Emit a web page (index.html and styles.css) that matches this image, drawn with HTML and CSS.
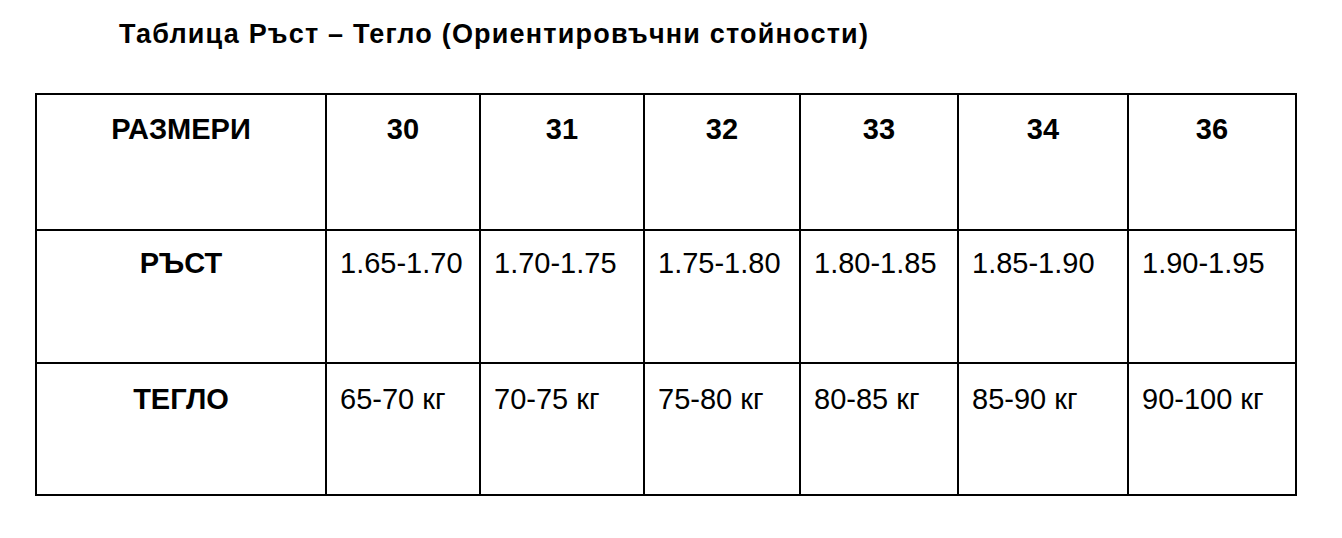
FILE: index.html
```html
<!DOCTYPE html>
<html lang="bg">
<head>
<meta charset="utf-8">
<title>Таблица Ръст – Тегло</title>
<link rel="stylesheet" href="styles.css">
</head>
<body>
<h1 class="title">Таблица Ръст – Тегло (Ориентировъчни стойности)</h1>
<div class="grid">
  <div class="cell head r1">РАЗМЕРИ</div>
  <div class="cell head r1">30</div>
  <div class="cell head r1">31</div>
  <div class="cell head r1">32</div>
  <div class="cell head r1">33</div>
  <div class="cell head r1">34</div>
  <div class="cell head r1">36</div>

  <div class="cell head r2">РЪСТ</div>
  <div class="cell data r2">1.65-1.70</div>
  <div class="cell data r2">1.70-1.75</div>
  <div class="cell data r2">1.75-1.80</div>
  <div class="cell data r2">1.80-1.85</div>
  <div class="cell data r2">1.85-1.90</div>
  <div class="cell data r2">1.90-1.95</div>

  <div class="cell head r3">ТЕГЛО</div>
  <div class="cell data r3">65-70 кг</div>
  <div class="cell data r3">70-75 кг</div>
  <div class="cell data r3">75-80 кг</div>
  <div class="cell data r3">80-85 кг</div>
  <div class="cell data r3">85-90 кг</div>
  <div class="cell data r3">90-100 кг</div>
</div>
</body>
</html>
```
FILE: styles.css
```css
html, body {
  margin: 0;
  padding: 0;
  background: #fff;
}
body {
  font-family: "Liberation Sans", Arial, sans-serif;
  color: #000;
  width: 1342px;
  height: 538px;
  overflow: hidden;
}
.title {
  margin: 0;
  padding: 19px 0 0 119px;
  font-size: 27px;
  line-height: 30px;
  letter-spacing: 1.2px;
  font-weight: bold;
}
.grid {
  margin: 44px 0 0 35px;
  width: 1262px;
  display: grid;
  grid-template-columns: 290px 154px 164px 156px 158px 170px 168px;
  grid-template-rows: 136px 133px 132px;
  border-top: 2px solid #000;
  border-left: 2px solid #000;
  box-sizing: border-box;
}
.cell {
  box-sizing: border-box;
  border-right: 2px solid #000;
  border-bottom: 2px solid #000;
  font-size: 29px;
  line-height: normal;
}
.head {
  font-weight: bold;
  text-align: center;
}
.data {
  text-align: left;
  padding-left: 13px;
}
.r1 { padding-top: 18px; }
.r2 { padding-top: 16px; }
.r3 { padding-top: 19px; }
```
